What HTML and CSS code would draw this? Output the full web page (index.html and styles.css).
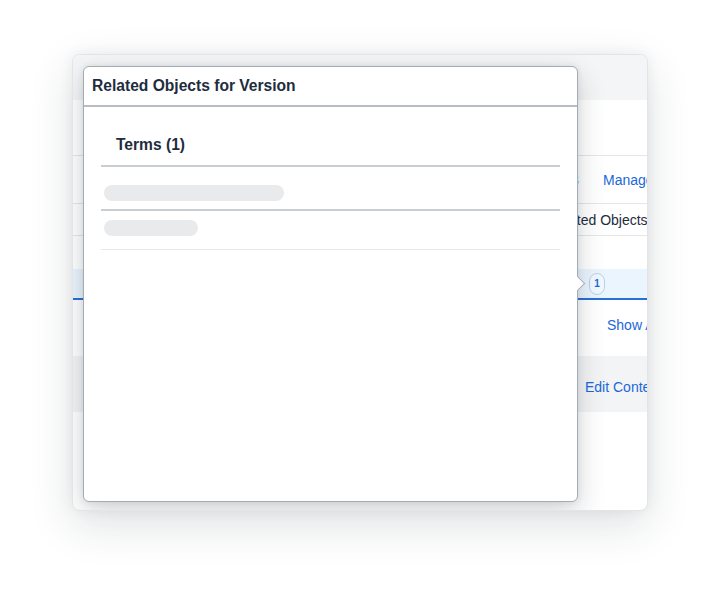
FILE: index.html
```html
<!DOCTYPE html>
<html lang="en">
<head>
  <meta charset="UTF-8" />
  <meta name="viewport" content="width=device-width, initial-scale=1.0" />
  <title>Related Objects</title>
  <link rel="stylesheet" href="styles.css">
</head>
<body>
  <div class="stage">
    <div class="card">
      <div class="card-head"></div>
      <div class="card-intro"></div>

      <div class="row row-tools">
        <span class="link count">3</span>
        <span class="link">Manage</span>
      </div>
      <div class="row row-cols">
        <span class="col-title">Related Objects</span>
      </div>
      <div class="row row-blank"></div>
      <div class="row row-selected">
        <span class="badge">1</span>
      </div>
      <div class="row row-more">
        <span class="link">Show All</span>
      </div>
      <div class="row row-footer">
        <span class="link">Edit Content</span>
      </div>

      <!-- popover opened from the badge -->
      <div class="popover">
        <div class="popover-head">Related Objects for Version</div>
        <div class="popover-body">
          <div class="group-title">Terms (1)</div>
          <div class="list-item first">
            <div class="skeleton wide"></div>
          </div>
          <div class="list-item last">
            <div class="skeleton short"></div>
          </div>
        </div>
      </div>
    </div>
  </div>
</body>
</html>
```

FILE: styles.css
```css
body {
  margin: 0;
  padding: 0;
  background-color: #fff;
  font-family: "Liberation Sans", Arial, sans-serif;
  color: #1d2d3e;
}

.stage {
  padding: 54px 72px 90px 72px;
}

.card {
  position: relative;
  width: 574px;
  height: 455px;
  border: 1px solid #e2e4e7;
  border-radius: 8px;
  background-color: #fff;
  overflow: hidden;
  box-shadow: 0 14px 44px rgba(30, 40, 50, 0.14), 0 0 14px rgba(30, 40, 50, 0.06);
  display: flex;
  flex-direction: column;
}

.card-head {
  height: 45px;
  background-color: #f4f5f6;
}

.card-intro {
  height: 55px;
  border-bottom: 1px solid #e4e6e8;
}

.row {
  display: flex;
  align-items: center;
  font-size: 14px;
  white-space: nowrap;
}

.row span {
  flex-shrink: 0;
}

.link {
  color: #1b68d8;
}

.row-tools {
  height: 47px;
  border-bottom: 1px solid #e4e6e8;
  padding-left: 498px;
}

.count {
  width: 32px;
}

.row-cols {
  height: 31px;
  border-bottom: 1px solid #e4e6e8;
  padding-left: 475px;
}

.col-title {
  color: #1d2d3e;
}

.row-blank {
  height: 33px;
}

.row-selected {
  height: 29px;
  background-color: #ebf5fe;
  border-bottom: 2px solid #2a6fd6;
  padding-left: 516px;
}

.badge {
  display: inline-flex;
  align-items: center;
  justify-content: center;
  width: 14px;
  height: 20px;
  border: 1px solid #b7d3f2;
  border-radius: 8px;
  font-size: 10px;
  font-weight: 700;
  color: #1b68d8;
  background-color: #f2f8fe;
}

.row-more {
  height: 50px;
  padding-bottom: 6px;
  padding-left: 534px;
}

.row-footer {
  height: 50px;
  padding-top: 6px;
  background-color: #f3f4f5;
  padding-left: 512px;
}

.popover {
  position: absolute;
  left: 10px;
  top: 11px;
  width: 493px;
  height: 434px;
  border: 1px solid #a3abb4;
  border-radius: 6px;
  background-color: #fff;
  box-shadow: 0 10px 28px rgba(30, 40, 50, 0.2), 0 0 6px rgba(30, 40, 50, 0.1);
}

.popover::after {
  content: "";
  position: absolute;
  right: -6px;
  top: 211px;
  width: 10px;
  height: 10px;
  background-color: #fff;
  border-top: 1px solid #a3abb4;
  border-right: 1px solid #a3abb4;
  transform: rotate(45deg);
}

.popover-head {
  height: 38px;
  padding-left: 8px;
  display: flex;
  align-items: center;
  font-size: 15.6px;
  font-weight: 700;
  border-bottom: 2px solid #b6bdc4;
}

.popover-body {
  padding: 0 17px;
}

.group-title {
  height: 60px;
  padding-left: 15px;
  box-sizing: border-box;
  padding-top: 17px;
  display: flex;
  align-items: center;
  font-size: 15.6px;
  font-weight: 700;
  border-bottom: 2px solid #c8cdd2;
}

.list-item {
  display: flex;
  align-items: flex-start;
  padding-left: 3px;
}

.list-item.first {
  height: 24px;
  padding-top: 18px;
  border-bottom: 2px solid #c8cdd2;
}

.list-item.last {
  height: 29px;
  padding-top: 9px;
  border-bottom: 1px solid #e6e8ea;
}

.skeleton {
  height: 16px;
  border-radius: 8px;
  background-color: #e9eaec;
}

.skeleton.wide {
  width: 180px;
}

.skeleton.short {
  width: 94px;
}
```
